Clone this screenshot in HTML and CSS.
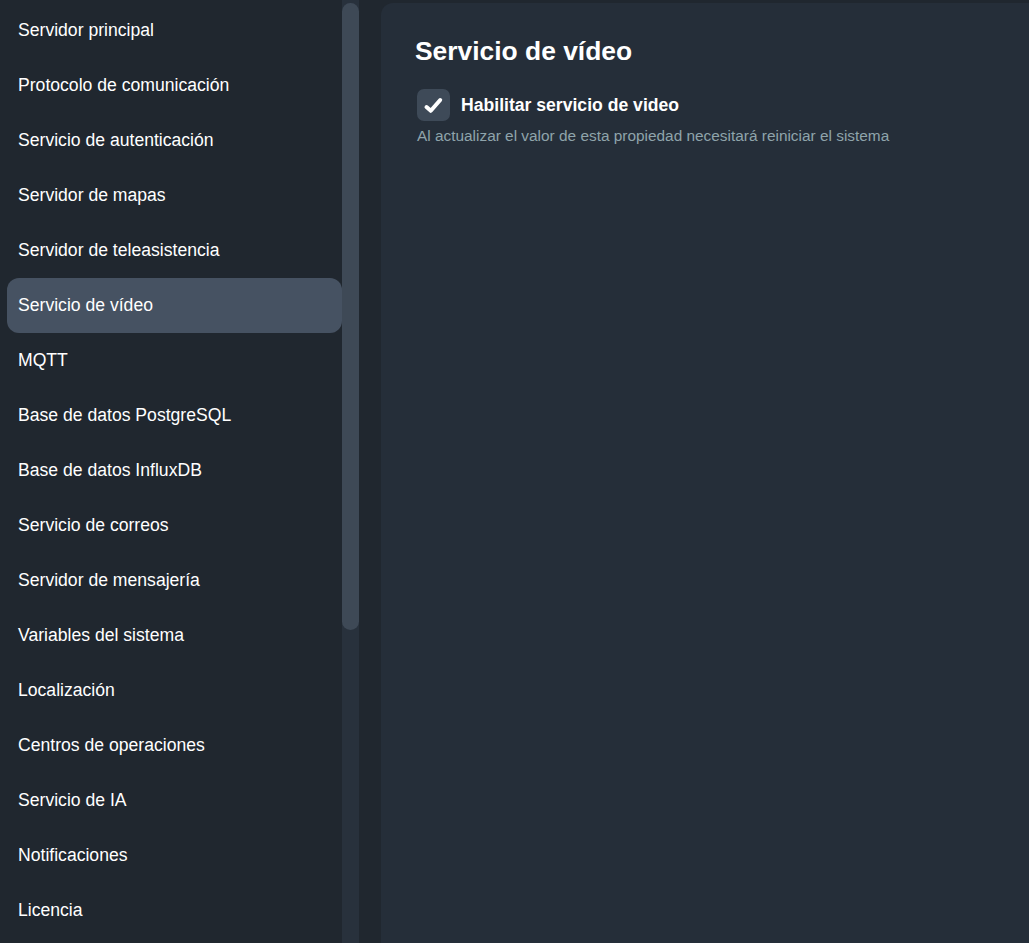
FILE: index.html
```html
<!DOCTYPE html>
<html lang="es">
<head>
<meta charset="utf-8">
<title>Configuración</title>
<link rel="stylesheet" href="styles.css">
</head>
<body>
<div class="app">
  <aside class="sidebar">
    <nav class="menu">
      <div class="item">Servidor principal</div>
      <div class="item">Protocolo de comunicación</div>
      <div class="item">Servicio de autenticación</div>
      <div class="item">Servidor de mapas</div>
      <div class="item">Servidor de teleasistencia</div>
      <div class="item active">Servicio de vídeo</div>
      <div class="item">MQTT</div>
      <div class="item">Base de datos PostgreSQL</div>
      <div class="item">Base de datos InfluxDB</div>
      <div class="item">Servicio de correos</div>
      <div class="item">Servidor de mensajería</div>
      <div class="item">Variables del sistema</div>
      <div class="item">Localización</div>
      <div class="item">Centros de operaciones</div>
      <div class="item">Servicio de IA</div>
      <div class="item">Notificaciones</div>
      <div class="item">Licencia</div>
    </nav>
    <div class="scrolltrack"><div class="scrollthumb"></div></div>
  </aside>
  <main class="panel">
    <h1 class="title">Servicio de vídeo</h1>
    <label class="check-row">
      <span class="checkbox">
        <svg viewBox="0 0 33 32" width="33" height="32" aria-hidden="true">
          <path d="M9.5 18 L13.8 21.8 L23.2 11" fill="none" stroke="#ffffff" stroke-width="4" stroke-linecap="round" stroke-linejoin="round"/>
        </svg>
      </span>
      <span class="check-label">Habilitar servicio de video</span>
    </label>
    <p class="hint">Al actualizar el valor de esta propiedad necesitará reiniciar el sistema</p>
  </main>
</div>
</body>
</html>
```

FILE: styles.css
```css
html, body {
  margin: 0;
  padding: 0;
  height: 100%;
  background: #20272f;
  font-family: "Liberation Sans", Arial, sans-serif;
  color: #ffffff;
  overflow: hidden;
}

.app {
  display: flex;
  height: 100vh;
}

.sidebar {
  width: 359px;
  flex: none;
  display: flex;
  background: #20272f;
}

.menu {
  flex: 1;
  padding: 3px 0 0 7px;
  display: flex;
  flex-direction: column;
}

.item {
  height: 55px;
  display: flex;
  align-items: center;
  padding-left: 11px;
  font-size: 17.6px;
  color: #ffffff;
  border-radius: 12px;
  flex: none;
}

.item.active {
  background: #465262;
}

.scrolltrack {
  width: 17px;
  flex: none;
  background: #28313c;
}

.scrollthumb {
  margin-top: 3px;
  height: 627px;
  border-radius: 8.5px;
  background: #3e4956;
}

.panel {
  flex: 1;
  margin: 3px 0 0 22px;
  background: #252e39;
  border-radius: 12px 0 0 0;
  padding: 33px 0 0 34px;
}

.title {
  margin: 0;
  font-size: 26.4px;
  line-height: 30px;
  font-weight: 700;
}

.check-row {
  display: flex;
  align-items: center;
  gap: 11px;
  margin: 23px 0 0 2px;
}

.checkbox {
  width: 33px;
  height: 32px;
  border-radius: 7px;
  background: #3e4a58;
  display: flex;
  align-items: center;
  justify-content: center;
}

.check-label {
  font-size: 17.6px;
  font-weight: 700;
}

.hint {
  margin: 6px 0 0 2px;
  font-size: 15.4px;
  line-height: 18px;
  color: #8fa4ab;
}
```
